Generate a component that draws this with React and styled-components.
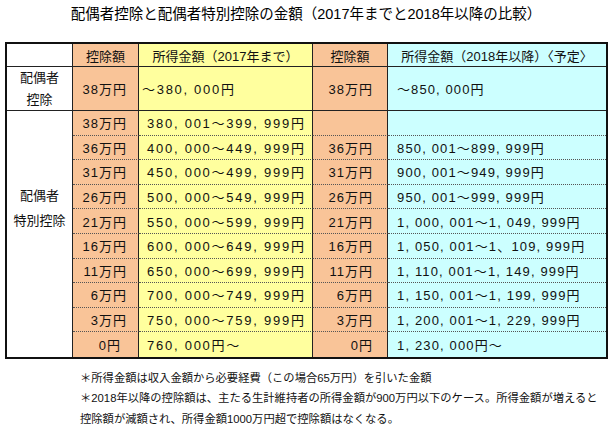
import React from "react";
import styled, { createGlobalStyle } from "styled-components";

const GlobalStyle = createGlobalStyle`
  html, body {
    margin: 0;
    padding: 0;
    background: #fff;
  }
  body {
    font-family: "Liberation Sans", "Noto Sans CJK JP", sans-serif;
    color: #111;
  }
`;

const PEACH = "#f9c498";
const YELLOW = "#ffff9e";
const CYAN = "#ccffff";

const Page = styled.div`
  width: 612px;
  height: 427px;
  overflow: hidden;
  display: flex;
  flex-direction: column;
`;

const Title = styled.h1`
  margin: 0;
  padding-top: 4px;
  font-size: 14.5px;
  line-height: 20px;
  font-weight: normal;
  text-align: center;
  color: #000;
`;

const Table = styled.div`
  margin: 18px 0 0 5px;
  width: 603px;
  box-sizing: border-box;
  border: 2px solid #111;
  display: grid;
  grid-template-columns: 66px 66px 174px 75px 1fr;
  grid-template-rows: 23px 44px repeat(10, 24.6px);
  font-size: 13px;
`;

const Cell = styled.div`
  box-sizing: border-box;
  background: ${(p) => p.$bg || "#fff"};
  border-right: ${(p) => (p.$last ? "none" : "1px solid #222")};
  border-bottom: ${(p) =>
    p.$end ? "none" : p.$dotted ? "1px dotted #555" : "1px solid #222"};
  display: flex;
  align-items: center;
  justify-content: ${(p) =>
    p.$align === "right" ? "flex-end" : p.$align === "left" ? "flex-start" : "center"};
  padding-left: ${(p) => p.$pl || 0}px;
  padding-right: ${(p) => p.$pr || 0}px;
  white-space: nowrap;
  letter-spacing: ${(p) => p.$ls || 0}px;
`;

const Label = styled.div`
  box-sizing: border-box;
  grid-row: ${(p) => p.$rows};
  background: #fff;
  border-right: 1px solid #222;
  border-bottom: ${(p) => (p.$end ? "none" : "1px solid #222")};
  display: flex;
  flex-direction: column;
  align-items: center;
  justify-content: ${(p) => (p.$top ? "flex-start" : "center")};
  padding-top: ${(p) => p.$top || 0}px;
  line-height: ${(p) => p.$lh}px;
`;

const Notes = styled.div`
  margin: 9px 0 0 80px;
  font-size: 11.3px;
  line-height: 20.5px;
  white-space: nowrap;
`;

const Note = styled.div``;

const special = [
  ["38万円", "380, 001～399, 999円", "", ""],
  ["36万円", "400, 000～449, 999円", "36万円", "850, 001～899, 999円"],
  ["31万円", "450, 000～499, 999円", "31万円", "900, 001～949, 999円"],
  ["26万円", "500, 000～549, 999円", "26万円", "950, 001～999, 999円"],
  ["21万円", "550, 000～599, 999円", "21万円", "1, 000, 001～1, 049, 999円"],
  ["16万円", "600, 000～649, 999円", "16万円", "1, 050, 001～1、109, 999円"],
  ["11万円", "650, 000～699, 999円", "11万円", "1, 110, 001～1, 149, 999円"],
  ["6万円", "700, 000～749, 999円", "6万円", "1, 150, 001～1, 199, 999円"],
  ["3万円", "750, 000～759, 999円", "3万円", "1, 200, 001～1, 229, 999円"],
  ["0円", "760, 000円～", "0円", "1, 230, 000円～"],
];

export default function App() {
  return (
    <Page>
      <GlobalStyle />
      <Title>配偶者控除と配偶者特別控除の金額（2017年までと2018年以降の比較）</Title>
      <Table>
        <Cell />
        <Cell $bg={PEACH}>控除額</Cell>
        <Cell $bg={YELLOW}>所得金額（2017年まで）</Cell>
        <Cell $bg={PEACH}>控除額</Cell>
        <Cell $bg={CYAN} $last>所得金額（2018年以降）〈予定〉</Cell>

        <Label $lh={22}>
          <span>配偶者</span>
          <span>控除</span>
        </Label>
        <Cell $bg={PEACH} $align="right" $pr={11} $ls={1}>38万円</Cell>
        <Cell $bg={YELLOW} $align="left" $pl={3} $ls={1.7}>～380, 000円</Cell>
        <Cell $bg={PEACH} $align="right" $pr={14} $ls={1}>38万円</Cell>
        <Cell $bg={CYAN} $align="left" $pl={9} $ls={1.1} $last>～850, 000円</Cell>

        <Label $rows="3 / span 10" $top={72} $lh={25} $end>
          <span>配偶者</span>
          <span>特別控除</span>
        </Label>
        {special.map(([a, b, c, d], i) => {
          const end = i === special.length - 1;
          return (
            <React.Fragment key={i}>
              <Cell $bg={PEACH} $align="right" $pr={end ? 17 : 11} $ls={1} $dotted $end={end}>
                {a}
              </Cell>
              <Cell $bg={YELLOW} $align="left" $pl={8} $ls={1.75} $dotted $end={end}>
                {b}
              </Cell>
              <Cell $bg={PEACH} $align="right" $pr={14} $ls={1} $dotted $end={end}>
                {c}
              </Cell>
              <Cell $bg={CYAN} $align="left" $pl={9} $ls={1.15} $dotted $end={end} $last>
                {d}
              </Cell>
            </React.Fragment>
          );
        })}
      </Table>
      <Notes>
        <Note>＊所得金額は収入金額から必要経費（この場合65万円）を引いた金額</Note>
        <Note>＊2018年以降の控除額は、主たる生計維持者の所得金額が900万円以下のケース。所得金額が増えると</Note>
        <Note>控除額が減額され、所得金額1000万円超で控除額はなくなる。</Note>
      </Notes>
    </Page>
  );
}
